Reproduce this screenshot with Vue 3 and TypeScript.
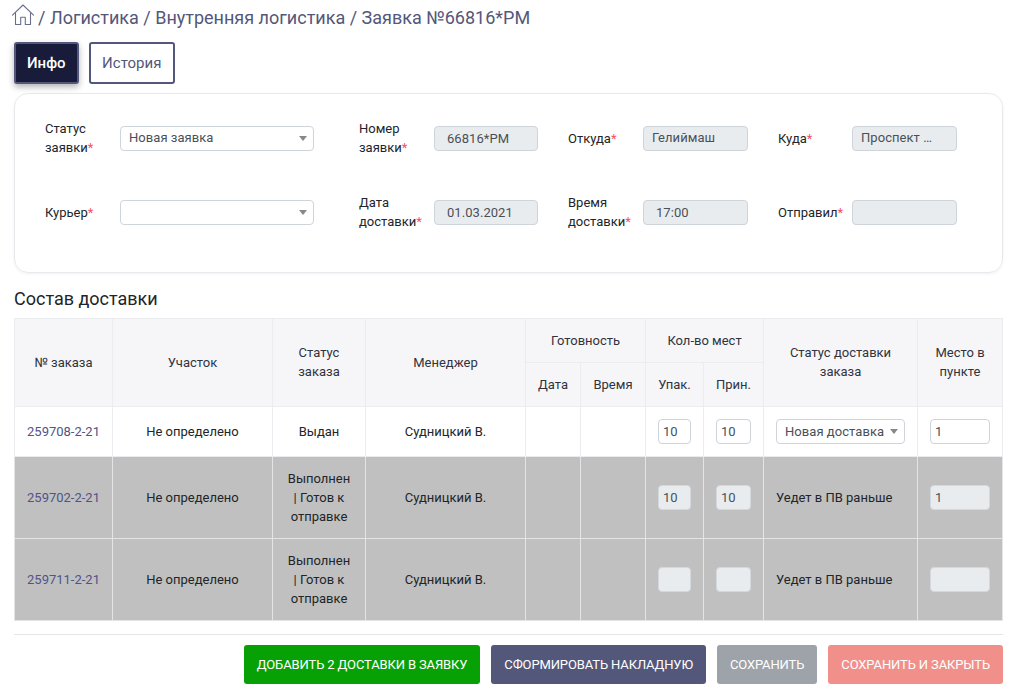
<script setup lang="ts">
interface Row {
  id: string
  status: string[]
  place: string
  recv: string
  point: string
  delivery: string
  done: boolean
}
const rows: Row[] = [
  { id: '259708-2-21', status: ['Выдан'], place: '10', recv: '10', point: '1', delivery: '', done: false },
  { id: '259702-2-21', status: ['Выполнен', '| Готов к', 'отправке'], place: '10', recv: '10', point: '1', delivery: 'Уедет в ПВ раньше', done: true },
  { id: '259711-2-21', status: ['Выполнен', '| Готов к', 'отправке'], place: '', recv: '', point: '', delivery: 'Уедет в ПВ раньше', done: true },
]
const colWidths = [98, 160, 93, 160, 55, 65, 58, 60, 154, 85]
</script>

<template>
  <div class="page">
    <nav class="crumbs">
      <svg class="home" viewBox="0 0 24 24" width="24" height="24" fill="none" stroke="#6a6e8e" stroke-width="1.1" stroke-linejoin="round" stroke-linecap="round">
        <path d="M1.5 12.2 12 2l10.5 10.2" />
        <path d="M4.5 10v11.5h5.2v-7.2h4.6v7.2h5.2V10" />
      </svg>
      <span>/ Логистика / Внутренняя логистика / Заявка №66816*РМ</span>
    </nav>

    <div class="tabs">
      <button class="tab active">Инфо</button>
      <button class="tab">История</button>
    </div>

    <section class="card">
      <div class="field">
        <label>Статус заявки<i>*</i></label>
        <div class="control select wide up1"><span>Новая заявка</span><b class="caret"></b></div>
      </div>
      <div class="field">
        <label>Номер заявки<i>*</i></label>
        <div class="control ro pad narrow"><span>66816*РМ</span></div>
      </div>
      <div class="field">
        <label>Откуда<i>*</i></label>
        <div class="control ro up"><span>Гелиймаш</span></div>
      </div>
      <div class="field last">
        <label>Куда<i>*</i></label>
        <div class="control ro up"><span>Проспект …</span></div>
      </div>
      <div class="field">
        <label>Курьер<i>*</i></label>
        <div class="control select wide"><span></span><b class="caret"></b></div>
      </div>
      <div class="field">
        <label>Дата доставки<i>*</i></label>
        <div class="control ro pad narrow"><span>01.03.2021</span></div>
      </div>
      <div class="field">
        <label>Время доставки<i>*</i></label>
        <div class="control ro pad"><span>17:00</span></div>
      </div>
      <div class="field last">
        <label>Отправил<i>*</i></label>
        <div class="control ro"><span></span></div>
      </div>
    </section>

    <h2 class="title">Состав доставки</h2>

    <table class="grid">
      <colgroup>
        <col v-for="(w, i) in colWidths" :key="i" :style="{ width: w + 'px' }" />
      </colgroup>
      <thead>
        <tr class="h1">
          <th rowspan="2">№ заказа</th>
          <th rowspan="2">Участок</th>
          <th rowspan="2" class="lift">Статус<br />заказа</th>
          <th rowspan="2">Менеджер</th>
          <th colspan="2">Готовность</th>
          <th colspan="2">Кол-во мест</th>
          <th rowspan="2" class="lift">Статус доставки<br />заказа</th>
          <th rowspan="2" class="lift">Место в<br />пункте</th>
        </tr>
        <tr class="h2">
          <th>Дата</th>
          <th>Время</th>
          <th>Упак.</th>
          <th>Прин.</th>
        </tr>
      </thead>
      <tbody>
        <tr v-for="r in rows" :key="r.id" :class="{ done: r.done }">
          <td><a class="link">{{ r.id }}</a></td>
          <td>Не определено</td>
          <td><div v-for="s in r.status" :key="s">{{ s }}</div></td>
          <td>Судницкий В.</td>
          <td></td>
          <td></td>
          <td><div class="cell-input n1" :class="{ off: r.done }">{{ r.place }}</div></td>
          <td><div class="cell-input n2" :class="{ off: r.done }">{{ r.recv }}</div></td>
          <td class="left">
            <template v-if="r.done">{{ r.delivery }}</template>
            <div v-else class="control select small"><span>Новая доставка</span><b class="caret"></b></div>
          </td>
          <td><div class="cell-input n3" :class="{ off: r.done }">{{ r.point }}</div></td>
        </tr>
      </tbody>
    </table>

    <footer class="actions">
      <button class="btn green">ДОБАВИТЬ 2 ДОСТАВКИ В ЗАЯВКУ</button>
      <button class="btn slate">СФОРМИРОВАТЬ НАКЛАДНУЮ</button>
      <button class="btn gray">СОХРАНИТЬ</button>
      <button class="btn red">СОХРАНИТЬ И ЗАКРЫТЬ</button>
    </footer>
  </div>
</template>

<style>
body {
  margin: 0;
  background: #fff;
}
</style>

<style scoped>
.page {
  width: 989px;
  margin-left: 14px;
  font-family: Roboto, "Liberation Sans", sans-serif;
  font-size: 13px;
  color: #212529;
}
.crumbs {
  display: flex;
  align-items: center;
  gap: 3px;
  height: 34px;
  margin-left: -3px;
  font-size: 18px;
  color: #53577a;
}
.home {
  flex: none;
  margin-top: -4px;
}
.tabs {
  display: flex;
  gap: 10px;
  margin-top: 8px;
}
.tab {
  height: 42px;
  padding: 0 11.5px;
  border: 2px solid #53577a;
  border-radius: 3px;
  background: #fff;
  color: #53577a;
  font: 400 15px Roboto, sans-serif;
}
.tab.active {
  padding: 0 11px;
  background: #181b39;
  color: #fff;
  font-weight: 500;
  box-shadow: 0 3px 6px rgba(0, 0, 0, 0.3);
}
.card {
  box-sizing: border-box;
  height: 180px;
  margin-top: 9px;
  padding: 7px 0 0 30px;
  display: grid;
  grid-template-columns: 314px 209px 210px 1fr;
  grid-template-rows: 74px 74px;
  align-content: start;
  border: 1px solid #e8e9ed;
  border-radius: 14px;
  box-shadow: 0 1px 3px rgba(0, 0, 0, 0.06);
}
.field {
  display: flex;
  align-items: center;
}
.field label {
  flex: none;
  width: 75px;
  line-height: 19px;
}
.field.last label {
  width: 74px;
}
.field label i {
  color: #f0506e;
  font-style: normal;
}
.control {
  box-sizing: border-box;
  display: flex;
  align-items: center;
  height: 25px;
  width: 105px;
  border: 1px solid #ced4da;
  border-radius: 4px;
  padding: 0 8px;
  color: #495057;
  letter-spacing: 0.05px;
}
.control.wide {
  width: 194px;
  padding-left: 8px;
}
.control.narrow {
  width: 104px;
}
.control.ro {
  background: #e9ecef;
}
.control.pad {
  padding-left: 12px;
}
.control.up span {
  margin-top: -2px;
}
.control.up1 span {
  margin-top: -2px;
}
.select {
  position: relative;
  background: #fff;
}
.caret {
  position: absolute;
  right: 6px;
  top: 9px;
  width: 0;
  height: 0;
  border-left: 4px solid transparent;
  border-right: 4px solid transparent;
  border-top: 5px solid #888;
}
.title {
  margin: 15px 0 8px;
  font-size: 18px;
  font-weight: 400;
  line-height: 22px;
  color: #212529;
}
.grid {
  width: 988px;
  table-layout: fixed;
  border-collapse: collapse;
  text-align: center;
  line-height: 19px;
}
.grid th,
.grid td {
  border: 1px solid #ebecef;
  padding: 0;
  vertical-align: middle;
}
.grid th {
  background: #f6f6f9;
  font-weight: 400;
  color: #2f3340;
}
.h1 th {
  height: 43px;
}
.h2 th {
  height: 43px;
}
.grid th.lift {
  padding-bottom: 2px;
}
.grid tbody tr {
  height: 50px;
}
.grid tbody tr.done {
  height: 82px;
  background: #c0c0c0;
}
.grid tr.done td {
  border-color: #e4e4e4;
}
.link {
  color: #4f5488;
}
.left {
  text-align: left;
}
.grid td.left {
  padding-left: 12px;
}
.control.small {
  width: 129px;
  padding: 0 8px;
}
.cell-input {
  box-sizing: border-box;
  height: 25px;
  margin: 0 auto;
  padding: 0 4px;
  border: 1px solid #ced4da;
  border-radius: 4px;
  background: #fff;
  text-align: left;
  line-height: 23px;
  color: #495057;
}
.n1 {
  width: 33px;
}
.n2 {
  width: 35px;
}
.n3 {
  width: 60px;
}
.cell-input.off {
  background: #e9ecef;
  border-color: #d5d8dc;
}
.actions {
  display: flex;
  justify-content: flex-end;
  gap: 11px;
  margin-top: 13px;
  padding-top: 10px;
  border-top: 1px solid #e5e5e8;
}
.btn {
  height: 39px;
  padding: 0 13px;
  border: 0;
  border-radius: 3px;
  color: #fff;
  font: 400 13px Roboto, sans-serif;
  letter-spacing: -0.13px;
}
.green {
  background: #08a105;
}
.slate {
  background: #53577a;
}
.gray {
  background: #9ea2a9;
}
.red {
  background: #f1908a;
}
</style>
